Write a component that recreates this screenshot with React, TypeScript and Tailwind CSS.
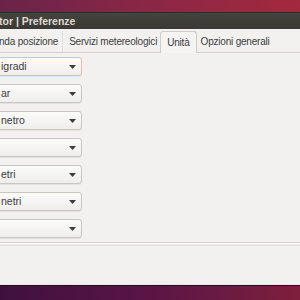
export default function App() {
  const combos = ["igradi", "ar", "netro", "", "etri", "netri", ""];

  return (
    <div
      className="relative w-[300px] h-[300px] overflow-hidden flex flex-col bg-[#f2f1f0]"
      style={{ fontFamily: '"Liberation Sans", Arial, sans-serif' }}
    >
      {/* wallpaper above the window */}
      <div className="h-[12px] shrink-0 bg-gradient-to-r from-[#6a2448] via-[#8c2646] to-[#a3293c]" />

      {/* title bar */}
      <div className="h-[17px] shrink-0 flex items-center bg-gradient-to-b from-[#45433e] to-[#3a3935] border-t border-[#2e2d2a]">
        <span className="text-[10.5px] font-bold text-[#dfdbd2] leading-none -ml-[1px] whitespace-nowrap">
          tor | Preferenze
        </span>
      </div>

      {/* window body */}
      <div className="flex-1 flex flex-col">
        {/* tab strip */}
        <div className="h-[24px] shrink-0 flex items-end border-b border-[#d2cfca] text-[10px] tracking-[-0.2px] text-[#3c3c3c] whitespace-nowrap">
          <div className="h-[21px] shrink-0 flex items-center pr-[4px] -ml-[1px]">nda posizione</div>
          <div className="h-[21px] shrink-0 w-px bg-[#e2dfdb]" />
          <div className="h-[21px] shrink-0 flex items-center pl-[6px] pr-[3px]">Servizi metereologici</div>
          <div className="h-[22px] shrink-0 flex items-center px-[6px] border border-b-0 border-[#cfcbc5] rounded-t-[3px] bg-[#f5f4f3] -mb-px">
            Unità
          </div>
          <div className="h-[21px] shrink-0 flex items-center pl-[4px]">Opzioni generali</div>
        </div>

        {/* combo boxes */}
        <div className="flex flex-col gap-[8px] pt-[4px]">
          {combos.map((c, i) => (
            <div
              key={i}
              className={`-ml-[10px] w-[92px] h-[19px] flex items-center justify-between rounded-[3px] border bg-gradient-to-b from-[#fbfbfa] to-[#efeeec] shadow-[0_1px_0_rgba(0,0,0,0.06)] ${
                i === 0 ? "border-[#e4bfa9]" : "border-[#c9c6c0]"
              }`}
            >
              <span className="pl-[10px] text-[10.5px] text-[#3c3c3c] leading-none">{c}</span>
              <svg width="7" height="4" viewBox="0 0 7 4" className="mr-[5px]">
                <path d="M0 0h7L3.5 4z" fill="#3c3c3c" />
              </svg>
            </div>
          ))}
        </div>

        {/* separator lines */}
        <div className="mt-[4px] h-px bg-[#d8d5d0]" />
        <div className="h-px bg-[#f7f6f5]" />
        <div className="h-px mt-[1px] bg-[#dedbd6]" />
        <div className="flex-1" />
        <div className="h-px bg-[#f3dfe6]" />
      </div>

      {/* wallpaper below the window */}
      <div className="h-[15px] shrink-0 bg-gradient-to-r from-[#3f103f] via-[#5a1545] to-[#7e1f3c] border-t border-[#2c0c2a]" />
    </div>
  );
}
